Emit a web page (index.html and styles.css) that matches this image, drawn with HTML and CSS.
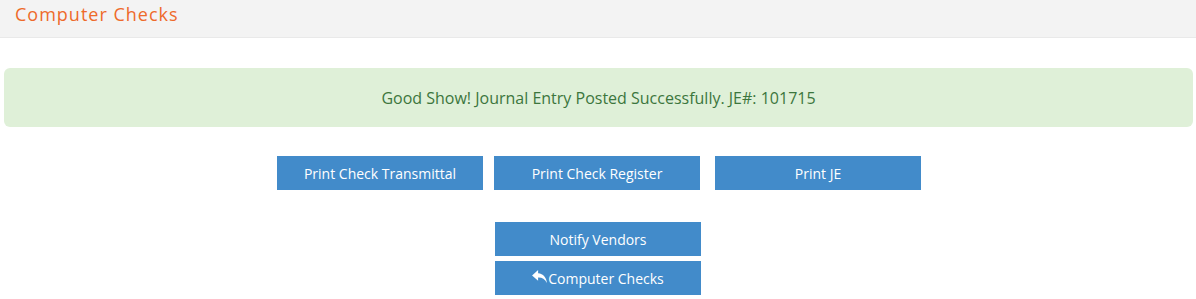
FILE: index.html
```html
<!DOCTYPE html>
<html>
<head>
<meta charset="utf-8">
<link rel="stylesheet" href="styles.css">
</head>
<body>
<div class="header"><h1 class="title">Computer Checks</h1></div>
<div class="alert">Good Show! Journal Entry Posted Successfully. JE#: 101715</div>
<div class="row row-print">
  <button class="btn b1">Print Check Transmittal</button>
  <button class="btn b2">Print Check Register</button>
  <button class="btn b3">Print JE</button>
</div>
<div class="stack">
  <button class="btn">Notify Vendors</button>
  <button class="btn"><svg class="icon" viewBox="0 0 16 14" width="15" height="13"><path d="M6.5 0 L0 5.8 L6.5 11.5 L6.5 8 C10.5 7.8 13.8 9.5 16 14 C15.5 8 12 3.8 6.5 3.4 Z" fill="#fff"/></svg>Computer Checks</button>
</div>
</body>
</html>
```
FILE: styles.css
```css
html, body { margin: 0; padding: 0; background: #fff; }
body { font-family: "Open Sans", "Liberation Sans", sans-serif; }
.header {
  height: 37px;
  background: #f3f3f3;
  border-bottom: 1px solid #e9e9e9;
  padding-left: 15px;
  display: flex;
  align-items: center;
}
.title {
  margin: 0;
  font-size: 18px;
  font-weight: 400;
  color: #ee6a2a;
  letter-spacing: 1px;
  line-height: 1;
  margin-top: -10px;
}
.alert {
  margin: 30px 3px 0 4px;
  height: 59px;
  background: #dff0d8;
  border-radius: 6px;
  color: #3c763d;
  font-size: 16px;
  display: flex;
  align-items: center;
  justify-content: center;
}
.row {
  display: flex;
  margin-top: 29px;
  padding-left: 277px;
}
.btn {
  width: 206px;
  height: 34px;
  border: none;
  background: #428bca;
  color: #fff;
  font-family: "Open Sans", "Liberation Sans", sans-serif;
  font-size: 14px;
  padding: 0;
  display: flex;
  align-items: center;
  justify-content: center;
}
.b2 { margin-left: 11px; }
.b3 { margin-left: 15px; }
.stack {
  display: flex;
  flex-direction: column;
  gap: 5px;
  margin-top: 32px;
  padding-left: 495px;
}
.icon { margin-right: 1px; margin-top: -3px; }
```
